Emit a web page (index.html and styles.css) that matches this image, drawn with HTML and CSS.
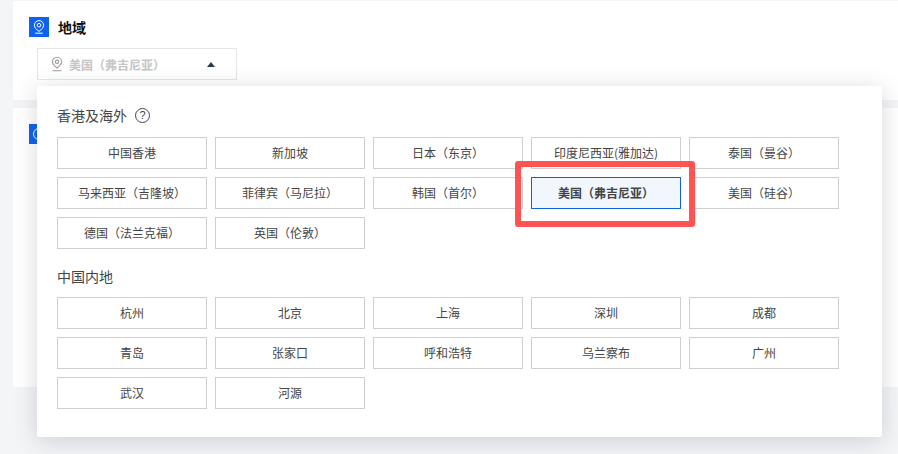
FILE: index.html
```html
<!DOCTYPE html>
<html lang="zh-CN">
<head>
<meta charset="utf-8">
<title>地域</title>
<link rel="stylesheet" href="styles.css">
</head>
<body>
<div class="page">
  <section class="card card-region">
    <div class="heading">
      <span class="badge"><svg viewBox="0 0 20 20" width="20" height="20"><path d="M10 3.600a4.600 4.600 0 0 0-4.600 4.600c0 2.500 2 4.200 4.600 6.200 2.600-2 4.600-3.700 4.600-6.200A4.600 4.600 0 0 0 10 3.600z" fill="none" stroke="#fff" stroke-width="1"/><circle cx="10" cy="8.200" r="1.800" fill="none" stroke="#fff" stroke-width="1"/><path d="M6.200 16.200h7.600" stroke="#fff" stroke-width="1"/></svg></span>
      <h2 class="heading-text">地域</h2>
    </div>
    <div class="select">
      <svg class="select-pin" viewBox="0 0 14 16" width="14" height="16"><path d="M7 1.200a4.600 4.600 0 0 0-4.600 4.600c0 2.500 2 4.200 4.600 6.200 2.600-2 4.600-3.700 4.600-6.200A4.600 4.600 0 0 0 7 1.200z" fill="none" stroke="#a8958c" stroke-width="1.100"/><circle cx="7" cy="5.800" r="1.700" fill="none" stroke="#8f9aa6" stroke-width="1.100"/><path d="M2.500 14.700h9" stroke="#a8a8a8" stroke-width="1.100"/></svg>
      <span class="select-label">美国（弗吉尼亚）</span>
      <span class="caret"></span>
    </div>
  </section>
  <section class="card card-next">
    <span class="badge"><svg viewBox="0 0 20 20" width="20" height="20"><circle cx="10" cy="10" r="5.500" fill="none" stroke="#fff" stroke-width="1"/></svg></span>
  </section>
</div>

<div class="popup">
  <div class="group-title">香港及海外 <span class="help">?</span></div>
  <div class="options">
    <button class="option">中国香港</button>
    <button class="option">新加坡</button>
    <button class="option">日本（东京）</button>
    <button class="option">印度尼西亚(雅加达)</button>
    <button class="option">泰国（曼谷）</button>
    <button class="option">马来西亚（吉隆坡）</button>
    <button class="option">菲律宾（马尼拉）</button>
    <button class="option">韩国（首尔）</button>
    <button class="option selected">美国（弗吉尼亚）</button>
    <button class="option">美国（硅谷）</button>
    <button class="option">德国（法兰克福）</button>
    <button class="option">英国（伦敦）</button>
  </div>
  <div class="group-title group-second">中国内地</div>
  <div class="options">
    <button class="option">杭州</button>
    <button class="option">北京</button>
    <button class="option">上海</button>
    <button class="option">深圳</button>
    <button class="option">成都</button>
    <button class="option">青岛</button>
    <button class="option">张家口</button>
    <button class="option">呼和浩特</button>
    <button class="option">乌兰察布</button>
    <button class="option">广州</button>
    <button class="option">武汉</button>
    <button class="option">河源</button>
  </div>
</div>
<div class="highlight"></div>
</body>
</html>
```

FILE: styles.css
```css
* { box-sizing: border-box; }
html, body { margin: 0; height: 100%; }
body {
  position: relative;
  width: 898px;
  height: 454px;
  overflow: hidden;
  background: #f4f5f7;
  font-family: "Noto Sans CJK SC", "Noto Sans", sans-serif;
  color: #444;
}
.page { padding: 1px 0 0 13px; display: flex; flex-direction: column; gap: 8px; }
.card { background: #fff; padding: 16px; }
.card-region { height: 99px; }
.card-next { height: 279px; }
.heading { display: flex; align-items: center; gap: 9px; height: 20px; }
.badge { display: block; width: 20px; height: 20px; background: #0f62f0; flex: none; }
.badge svg { display: block; }
.heading-text { margin: 0; font-size: 14px; line-height: 20px; font-weight: 700; color: #111; }
.select {
  display: flex;
  align-items: center;
  width: 200px;
  height: 32px;
  margin: 11px 0 0 8px;
  padding: 0 21px 0 12px;
  border: 1px solid #e6e6e6;
  background: #fff;
}
.select-pin { flex: none; margin-right: 5px; }
.select-label { flex: 1; font-size: 12px; font-weight: 700; color: #c6c6c6; white-space: nowrap; }
.caret { width: 0; height: 0; border-left: 4px solid transparent; border-right: 4px solid transparent; border-bottom: 5px solid #2b3a4a; }
.popup {
  position: absolute;
  left: 37px;
  top: 86px;
  width: 845px;
  height: 351px;
  padding: 19px 20px 20px;
  background: #fff;
  border-radius: 2px;
  box-shadow: 0 4px 24px rgba(54, 58, 80, 0.2);
}
.group-title {
  display: flex;
  align-items: center;
  gap: 8px;
  height: 20px;
  margin-bottom: 12px;
  font-size: 14px;
  line-height: 20px;
  color: #444;
}
.group-second { margin-top: 17px; margin-bottom: 11px; }
.help {
  display: flex;
  align-items: center;
  justify-content: center;
  width: 15px;
  height: 15px;
  border: 1px solid #444;
  border-radius: 50%;
  font: 11px/1 "Liberation Sans", sans-serif;
}
.options { display: grid; grid-template-columns: repeat(5, 150px); gap: 8px; }
.option {
  height: 32px;
  padding: 0 0 2px;
  border: 1px solid #cfcfcf;
  background: #fff;
  font-family: inherit;
  font-size: 12px;
  color: #444;
  white-space: nowrap;
}
.option.selected { border-color: #0f62d8; background: #f2f6fd; font-weight: 700; color: #444; }
.highlight {
  position: absolute;
  left: 515px;
  top: 161px;
  width: 180px;
  height: 66px;
  border: 6px solid #ff5454;
  border-radius: 3px;
}
```
